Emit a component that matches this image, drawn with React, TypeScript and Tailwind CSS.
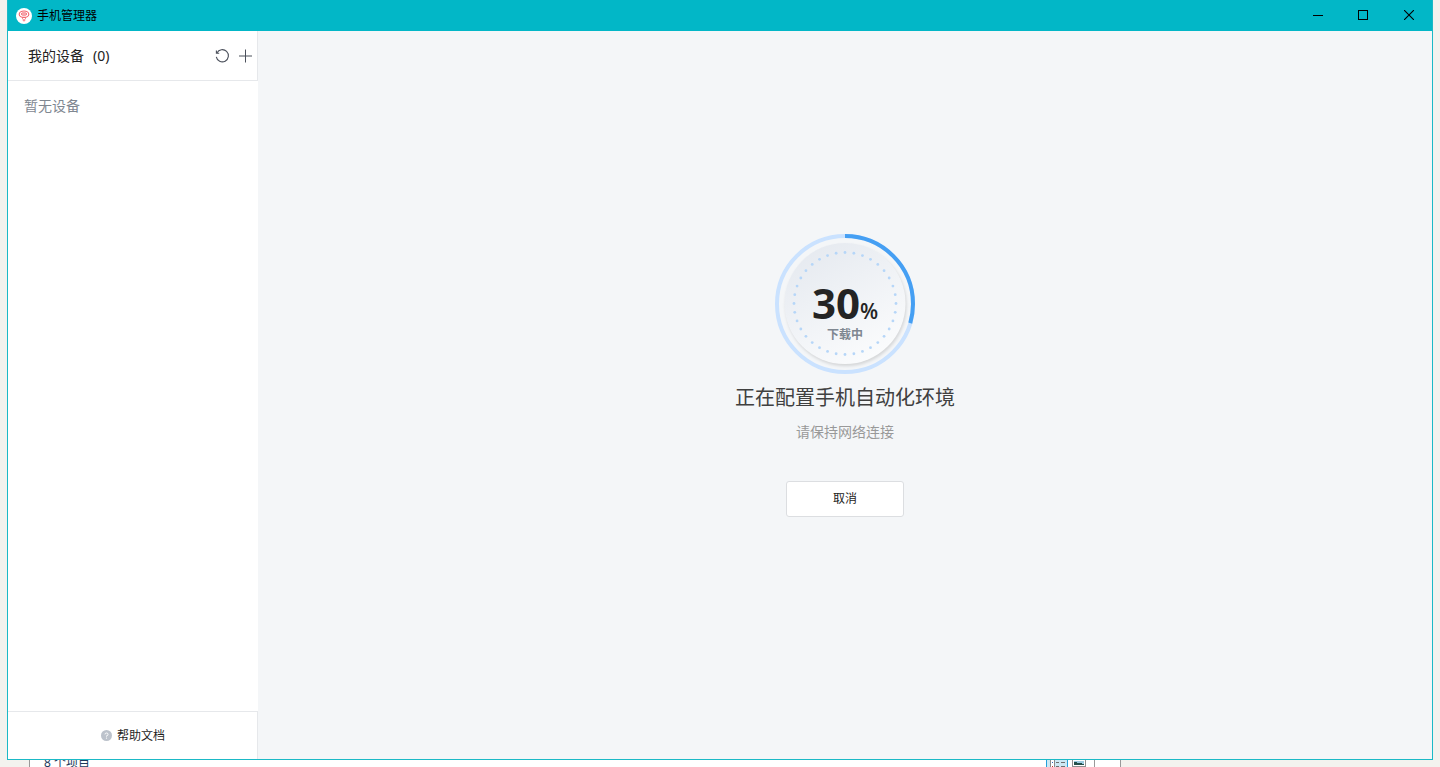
import React from "react";

const DOTS = Array.from({ length: 36 }, (_, i) => {
  const a = (i * Math.PI) / 18;
  return { x: 70 + 51 * Math.sin(a), y: 70 - 51 * Math.cos(a) };
});

function Logo() {
  return (
    <svg className="size-4" viewBox="0 0 16 16" fill="none" aria-hidden="true">
      <circle cx="8" cy="8" r="8" fill="#fff" />
      <ellipse cx="8" cy="6.2" rx="4.8" ry="3.2" stroke="#f4606a" strokeWidth="1.1" />
      <rect x="5.5" y="5" width="5" height="2" rx="1" fill="#fff" stroke="#ee4a56" strokeWidth="1" />
      <path d="M6.5 9.4 V10.5 L7.2 11.2 V12.6 Q8 13.6 8.8 12.6 V11.2 L9.5 10.5 V9.4" stroke="#f4606a" strokeWidth="0.9" />
    </svg>
  );
}

function TitleBar() {
  return (
    <header className="flex h-[31px] shrink-0 items-center bg-[#02b7c7] pl-2">
      <Logo />
      <h1 className="ml-[5px] flex-1 text-xs text-black">手机管理器</h1>
      <div className="flex h-[30px] self-start">
        <button aria-label="最小化" className="flex w-[45px] items-center justify-center">
          <svg width="10" height="10" viewBox="0 0 10 10" shapeRendering="crispEdges">
            <rect y="5" width="10" height="1" fill="#000" />
          </svg>
        </button>
        <button aria-label="最大化" className="flex w-[45px] items-center justify-center">
          <svg width="10" height="10" viewBox="0 0 10 10" fill="none" shapeRendering="crispEdges">
            <rect x="0.5" y="0.5" width="9" height="9" stroke="#000" />
          </svg>
        </button>
        <button aria-label="关闭" className="flex w-[47px] items-center justify-center">
          <svg width="10" height="10" viewBox="0 0 10 10" fill="none">
            <path d="M0 0 L10 10 M10 0 L0 10" stroke="#000" strokeWidth="1.1" />
          </svg>
        </button>
      </div>
    </header>
  );
}

function Sidebar() {
  return (
    <aside className="flex w-[250px] shrink-0 flex-col bg-white">
      <div className="flex h-[50px] items-center border-r border-b border-[#e6e8eb] pr-[5px] pl-5">
        <h2 className="flex flex-1 gap-[9px] text-sm text-[#222]">
          <span>我的设备</span>
          <span>(0)</span>
        </h2>
        <button aria-label="刷新" className="mr-2">
          <svg width="16" height="16" viewBox="0 0 16 16" fill="none" stroke="#4b505b" strokeWidth="1.1">
            <path d="M2.9 4.9 A6.1 6.1 0 1 1 2.3 8.9" />
            <path d="M2.4 2.4 V5.2 H5.2" />
          </svg>
        </button>
        <button aria-label="添加设备">
          <svg width="14" height="14" viewBox="0 0 14 14" fill="none">
            <path d="M7.5 0.5 V13.5" stroke="#4b505b" />
            <path d="M1 7 H14" stroke="#4b505b" />
          </svg>
        </button>
      </div>
      <p className="flex-1 px-4 pt-[15px] text-sm text-[#7f8791]">暂无设备</p>
      <a
        href="#help"
        className="flex h-12 items-center justify-center gap-[5px] border-t border-r border-[#e6e8eb] pl-px text-xs text-[#1f1f1f]"
      >
        <svg width="11" height="11" viewBox="0 0 11 11" fill="none" aria-hidden="true">
          <circle cx="5.5" cy="5.5" r="5.5" fill="#bcc2cb" />
          <path d="M4 4.4 A1.5 1.4 0 1 1 5.5 5.8 V6.6" stroke="#fff" strokeWidth="0.9" />
          <circle cx="5.5" cy="8.1" r="0.6" fill="#fff" />
        </svg>
        帮助文档
      </a>
    </aside>
  );
}

function ProgressDial({ percent }: { percent: number }) {
  return (
    <div
      className="grid size-[140px] place-items-center"
      role="progressbar"
      aria-label="下载中"
      aria-valuenow={percent}
      aria-valuemin={0}
      aria-valuemax={100}
    >
      <svg className="col-start-1 row-start-1" width="140" height="140" viewBox="0 0 140 140" fill="none">
        <defs>
          <linearGradient id="disc" x1="0.2" y1="0.05" x2="0.7" y2="0.95">
            <stop offset="0" stopColor="#e6eaf0" />
            <stop offset="1" stopColor="#fafbfc" />
          </linearGradient>
          <filter id="shade" x="-10%" y="-10%" width="120%" height="120%" colorInterpolationFilters="sRGB">
            <feDropShadow dx="1" dy="2" stdDeviation="1.5" floodColor="#000" floodOpacity="0.13" />
          </filter>
        </defs>
        <circle cx="70" cy="70" r="68" stroke="#cae2ff" strokeWidth="4" />
        <circle
          cx="70"
          cy="70"
          r="68"
          stroke="#459ff3"
          strokeWidth="4"
          pathLength="100"
          strokeDasharray={`${percent * 0.985} 100`}
          transform="rotate(-90 70 70)"
        />
        <circle cx="70" cy="69.5" r="60.5" fill="url(#disc)" filter="url(#shade)" />
        {DOTS.map((d, i) => (
          <circle key={i} cx={d.x} cy={d.y - 0.5} r="1.4" fill="#b6d6f8" />
        ))}
      </svg>
      <div className="col-start-1 row-start-1 flex flex-col items-center pt-[22px] font-bold">
        <div className="flex items-baseline font-['Open_Sans','Noto_Sans',sans-serif] leading-8 text-[#242424]">
          <span className="text-[42px] leading-8">{percent}</span>
          <span className="text-[21px] leading-8 font-semibold">%</span>
        </div>
        <span className="text-xs leading-4 text-[#7f8791]">下载中</span>
      </div>
    </div>
  );
}

export default function App() {
  return (
    <div className="flex h-screen flex-col overflow-hidden bg-[#f3f2ee] font-['Noto_Sans','Noto_Sans_CJK_SC',sans-serif]">
      <div className="mx-[7px] flex min-h-0 flex-1 flex-col border-x border-b border-[#1bb9c6]">
        <TitleBar />
        <div className="flex min-h-0 flex-1">
          <Sidebar />
          <main className="flex flex-1 flex-col items-center justify-center bg-[#f4f6f8] pb-[39px]">
            <ProgressDial percent={30} />
            <h2 className="mt-2 text-xl leading-8 text-[#404040]">正在配置手机自动化环境</h2>
            <p className="mt-1.5 text-sm leading-6 text-[#999]">请保持网络连接</p>
            <button className="mt-[37px] h-9 w-[118px] rounded-[3px] border border-[#dcdee1] bg-white text-xs text-[#222]">
              取消
            </button>
          </main>
        </div>
      </div>
      <footer className="mr-[319px] ml-[29px] flex h-[7px] shrink-0 justify-between overflow-hidden border-x border-[#999] bg-white">
        <span className="-mt-[7px] ml-3.5 text-xs leading-5 text-[#1e395b]">8 个项目</span>
        <div className="flex">
          <svg width="74" height="7" viewBox="0 0 74 7" fill="none" shapeRendering="crispEdges" aria-hidden="true">
            <rect x="0.5" y="-1.5" width="21" height="14" fill="#cce8f4" stroke="#26a0da" />
            <rect x="4.5" y="-0.5" width="4" height="9" fill="#fff" stroke="#8a8a8a" />
            <path d="M6 2.5 H7" stroke="#2d6cc0" />
            <path d="M6 6.5 H7" stroke="#c03030" />
            <path d="M10 2.5 H13 M15 2.5 H19 M10 6.5 H13 M15 6.5 H19" stroke="#6f6f6f" />
            <rect x="26.5" y="-0.5" width="13" height="7" fill="#fff" stroke="#8f8f8f" />
            <rect x="28" y="1" width="10" height="4" fill="#9ccbe0" />
            <path d="M28 2 L33 3 L38 4 V5 H28 Z" fill="#24504b" />
            <path d="M48.5 0 V7" stroke="#999" />
          </svg>
        </div>
      </footer>
    </div>
  );
}
